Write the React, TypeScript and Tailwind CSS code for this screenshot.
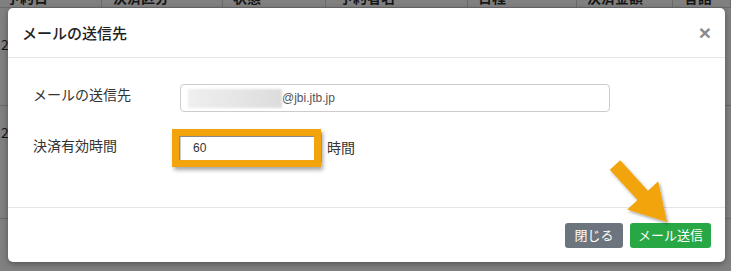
import React from 'react';

const jp = { fontFamily: '"Noto Sans CJK JP", "Noto Sans", sans-serif' };

const columns = [
  { label: '予約日', width: 'w-[102px]', pad: 'pl-[6px]' },
  { label: '決済区分', width: 'w-[121px]', pad: 'pl-[11px]' },
  { label: '状態', width: 'w-[103px]', pad: 'pl-[10px]' },
  { label: '予約者名', width: 'w-[142px]', pad: 'pl-[13px]' },
  { label: '日程', width: 'w-[109px]', pad: 'pl-[10px]' },
  { label: '決済金額', width: 'w-[96px]', pad: 'pl-[10px]' },
  { label: '言語', width: 'w-[58px]', pad: 'pl-[11px]' },
];

const Backdrop: React.FC = () => (
  <div className="flex flex-col" style={jp}>
    <div className="-mt-[14px] flex h-[22px] border-b border-[#6b6b6b]">
      {columns.map((c) => (
        <div
          key={c.label}
          className={`${c.width} ${c.pad} shrink-0 border-r border-[#6b6b6b] text-[14px] font-bold leading-[22px] text-[#161616]`}
        >
          {c.label}
        </div>
      ))}
    </div>
    <div className="h-[98px] border-b border-[#6b6b6b] pl-[1px] pt-[26px] text-[14px] text-[#161616]">2</div>
    <div className="h-[113px] border-b border-[#6b6b6b] pl-[1px] pt-[16px] text-[14px] text-[#161616]">2</div>
    <div className="flex h-[40px]">
      <div className="w-[442px] shrink-0 border-r border-[#6b6b6b]" />
      <div className="ml-[37px] h-[40px] w-[32px] bg-[#1d4a86]" />
      <div className="w-[38px] shrink-0 border-r border-[#6b6b6b]" />
    </div>
  </div>
);

const Arrow: React.FC = () => (
  <svg
    className="pointer-events-none absolute left-0 top-0"
    width="731"
    height="271"
    viewBox="0 0 731 271"
  >
    <defs>
      <filter id="sh" x="-20%" y="-20%" width="140%" height="140%">
        <feDropShadow dx="1.5" dy="2" stdDeviation="1.5" floodColor="#000" floodOpacity="0.35" />
      </filter>
    </defs>
    <polygon
      points="620.2,160.3 647.9,190.7 658.2,181.2 667,222 627.2,209.6 637.5,200.1 609.8,169.7"
      fill="#f2a40c"
      filter="url(#sh)"
    />
  </svg>
);

const App: React.FC = () => {
  return (
    <div className="relative h-[271px] w-[731px] overflow-hidden bg-[#808080]">
      <Backdrop />

      <div
        className="absolute left-[8px] top-[8px] flex h-[254px] w-[717px] flex-col rounded-[5px] bg-white shadow-[0_2px_6px_rgba(0,0,0,0.35)]"
        style={jp}
      >
        {/* header */}
        <div className="flex h-[50px] items-center justify-between border-b border-[#e5e5e5] pl-[14px] pr-[14px]">
          <h4 className="text-[15px] font-medium leading-none text-[#222]">メールの送信先</h4>
          <span className="text-[21px] font-bold leading-none text-[#8a8a8a]" style={{ fontFamily: '"Liberation Sans", sans-serif' }}>
            ×
          </span>
        </div>

        {/* body */}
        <div className="flex h-[149px] flex-col pl-[25px] pt-[26px]">
          <div className="flex items-start">
            <label className="w-[147px] pt-[1px] text-[14px] leading-[18px] text-[#333]">メールの送信先</label>
            <div className="flex h-[28px] w-[430px] items-center rounded-[4px] border border-[#ccc] pl-[7px]">
              <div className="h-[19px] w-[94px] bg-gradient-to-r from-[#efefef] via-[#e6e6e6] to-[#dcdcdc] blur-[1px]" />
              <span
                className="text-[12px] text-[#555]"
                style={{ fontFamily: '"Liberation Sans", sans-serif' }}
              >
                @jbi.jtb.jp
              </span>
            </div>
          </div>

          <div className="mt-[18px] flex items-center">
            <label className="w-[147px] -translate-y-[3px] text-[14px] leading-[18px] text-[#333]">決済有効時間</label>
            <div className="relative flex h-[35px] w-[142px] items-center rounded-[4px] border border-[#ccc] pl-[12px]">
              <span
                className="text-[12px] text-[#333]"
                style={{ fontFamily: '"Liberation Sans", sans-serif' }}
              >
                60
              </span>
              <div className="absolute -left-[9px] -top-[2px] h-[38px] w-[149px] border-[7px] border-[#f2a40c] shadow-[inset_1px_1px_0_#8a8a8a,2px_3px_4px_rgba(0,0,0,0.35)]" />
            </div>
            <span className="ml-[5px] text-[14px] text-[#333]">時間</span>
          </div>
        </div>

        {/* footer */}
        <div className="flex h-[55px] items-center justify-end gap-[7px] border-t border-[#e5e5e5] pr-[14px]">
          <button className="h-[25px] w-[58px] rounded-[3px] bg-[#6c757d] text-[13px] text-white">閉じる</button>
          <button className="h-[25px] w-[81px] rounded-[3px] bg-[#28a745] text-[13px] text-white">メール送信</button>
        </div>
      </div>

      <Arrow />
    </div>
  );
};

export default App;
